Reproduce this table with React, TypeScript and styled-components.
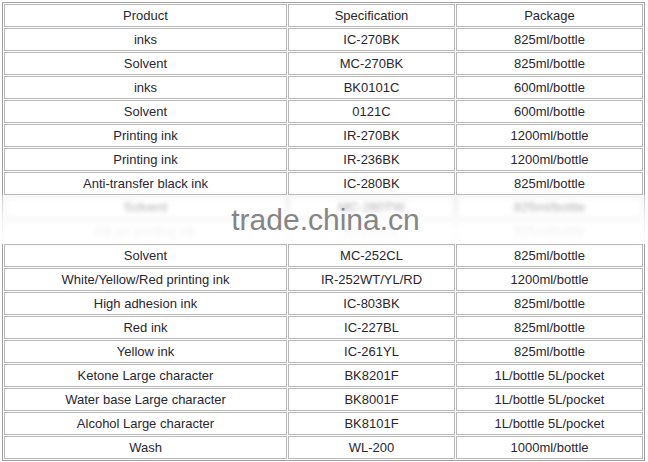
import React from 'react';
import styled, { createGlobalStyle } from 'styled-components';

type Row = { product: string; spec: string; pack: string; hidden?: boolean };

const rows: Row[] = [
  { product: 'inks', spec: 'IC-270BK', pack: '825ml/bottle' },
  { product: 'Solvent', spec: 'MC-270BK', pack: '825ml/bottle' },
  { product: 'inks', spec: 'BK0101C', pack: '600ml/bottle' },
  { product: 'Solvent', spec: '0121C', pack: '600ml/bottle' },
  { product: 'Printing ink', spec: 'IR-270BK', pack: '1200ml/bottle' },
  { product: 'Printing ink', spec: 'IR-236BK', pack: '1200ml/bottle' },
  { product: 'Anti-transfer black ink', spec: 'IC-280BK', pack: '825ml/bottle' },
  { product: 'Solvent', spec: 'MC-280TW', pack: '825ml/bottle', hidden: true },
  { product: 'Ink-jet printing ink', spec: 'IC-252CL', pack: '825ml/bottle', hidden: true },
  { product: 'Solvent', spec: 'MC-252CL', pack: '825ml/bottle' },
  { product: 'White/Yellow/Red printing ink', spec: 'IR-252WT/YL/RD', pack: '1200ml/bottle' },
  { product: 'High adhesion ink', spec: 'IC-803BK', pack: '825ml/bottle' },
  { product: 'Red ink', spec: 'IC-227BL', pack: '825ml/bottle' },
  { product: 'Yellow ink', spec: 'IC-261YL', pack: '825ml/bottle' },
  { product: 'Ketone Large character', spec: 'BK8201F', pack: '1L/bottle 5L/pocket' },
  { product: 'Water base Large character', spec: 'BK8001F', pack: '1L/bottle 5L/pocket' },
  { product: 'Alcohol Large character', spec: 'BK8101F', pack: '1L/bottle 5L/pocket' },
  { product: 'Wash', spec: 'WL-200', pack: '1000ml/bottle' },
];

const App: React.FC = () => {
  return (
    <Page>
      <GlobalStyle />
      <TableWrap>
        <Table>
          <colgroup>
            <col style={{ width: 283 }} />
            <col style={{ width: 167 }} />
            <col style={{ width: 187 }} />
          </colgroup>
          <tbody>
            <tr>
              <Cell>Product</Cell>
              <Cell>Specification</Cell>
              <Cell>Package</Cell>
            </tr>
            {rows.map((r, i) => (
              <tr key={i}>
                <Cell $hidden={r.hidden}>{r.product}</Cell>
                <Cell $hidden={r.hidden}>{r.spec}</Cell>
                <Cell $hidden={r.hidden}>{r.pack}</Cell>
              </tr>
            ))}
          </tbody>
        </Table>
        {/* watermark band over the two washed-out rows */}
        <Watermark>
          <WatermarkText>trade.china.cn</WatermarkText>
        </Watermark>
      </TableWrap>
    </Page>
  );
};

const GlobalStyle = createGlobalStyle`
  html, body {
    margin: 0;
    padding: 0;
    background: #ffffff;
  }
`;

const Page = styled.div`
  width: 648px;
  height: 462px;
  padding: 2px 0 0 2px;
  box-sizing: border-box;
  background: #ffffff;
  font-family: 'Liberation Sans', Arial, sans-serif;
`;

const TableWrap = styled.div`
  position: relative;
  width: 643px;
`;

const Table = styled.table`
  width: 643px;
  table-layout: fixed;
  border-collapse: separate;
  border-spacing: 1px;
  border: 1px solid #a2a2a2;
`;

const Cell = styled.td<{ $hidden?: boolean }>`
  height: 23px;
  padding: 0;
  box-sizing: border-box;
  border: 1px solid #b8b8b8;
  text-align: center;
  vertical-align: middle;
  font-size: 13px;
  color: #2a2630;
  white-space: nowrap;
  filter: ${({ $hidden }) => ($hidden ? 'blur(2px)' : 'none')};
`;

const Watermark = styled.div`
  position: absolute;
  left: -2px;
  right: -4px;
  top: 193px;
  height: 49px;
  display: flex;
  align-items: center;
  justify-content: center;
  background: linear-gradient(
    to bottom,
    rgba(255, 255, 255, 0.4) 0%,
    rgba(255, 255, 255, 0.7) 35%,
    rgba(255, 255, 255, 0.93) 70%,
    rgba(255, 255, 255, 0.97) 100%
  );
`;

const WatermarkText = styled.span`
  font-family: 'Liberation Sans', Arial, sans-serif;
  font-size: 30px;
  color: #858585;
  margin-left: 2px;
`;

export default App;
